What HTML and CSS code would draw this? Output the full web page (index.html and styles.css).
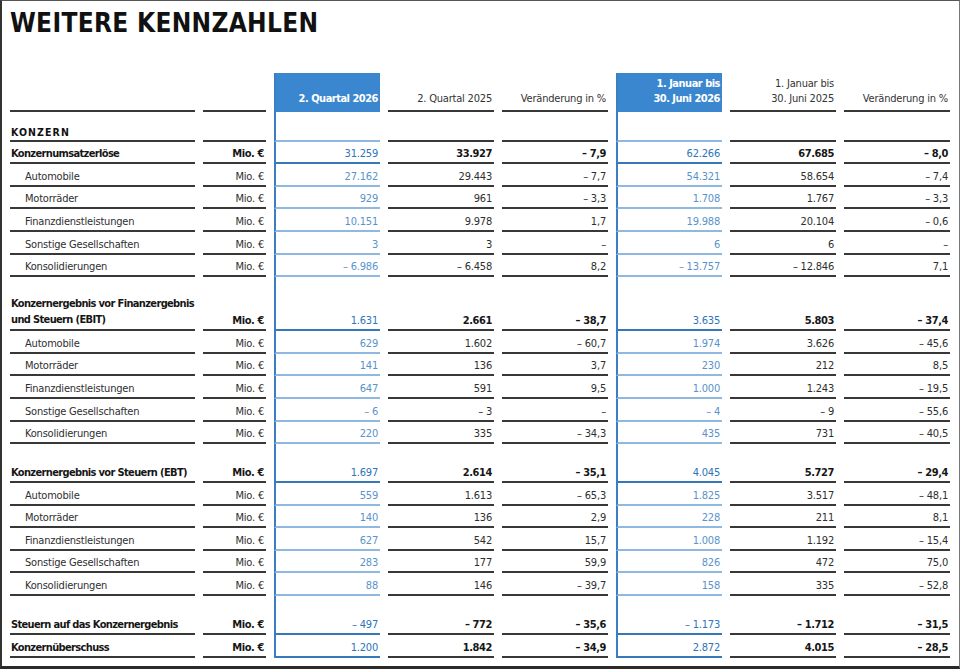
FILE: index.html
```html
<!DOCTYPE html>
<html lang="de">
<head>
<meta charset="utf-8">
<title>Weitere Kennzahlen</title>
<link rel="stylesheet" href="styles.css">
</head>
<body>
<div class="page">
  <h1 class="title">WEITERE KENNZAHLEN</h1>
  <table class="kz">
    <colgroup>
      <col class="c-lbl"><col class="c-unit">
      <col class="c-num"><col class="c-num"><col class="c-num">
      <col class="c-num"><col class="c-num"><col class="c-num">
    </colgroup>
    <thead>
      <tr class="hd">
        <th class="lbl"></th><th class="unit"></th>
        <th class="b">2. Quartal 2026</th>
        <th>2. Quartal 2025</th>
        <th>Veränderung in %</th>
        <th class="b">1. Januar bis<br>30. Juni 2026</th>
        <th>1. Januar bis<br>30. Juni 2025</th>
        <th>Veränderung in %</th>
      </tr>
    </thead>
    <tbody>
      <tr class="sec"><td class="lbl">KONZERN</td><td></td><td class="b"></td><td></td><td></td><td class="b"></td><td></td><td></td></tr>
      <tr class="t"><td class="lbl">Konzernumsatzerlöse</td><td class="unit">Mio. €</td><td class="b">31.259</td><td>33.927</td><td>–&nbsp;7,9</td><td class="b">62.266</td><td>67.685</td><td>–&nbsp;8,0</td></tr>
      <tr class="s"><td class="lbl">Automobile</td><td class="unit">Mio. €</td><td class="b">27.162</td><td>29.443</td><td>–&nbsp;7,7</td><td class="b">54.321</td><td>58.654</td><td>–&nbsp;7,4</td></tr>
      <tr class="s"><td class="lbl">Motorräder</td><td class="unit">Mio. €</td><td class="b">929</td><td>961</td><td>–&nbsp;3,3</td><td class="b">1.708</td><td>1.767</td><td>–&nbsp;3,3</td></tr>
      <tr class="s"><td class="lbl">Finanzdienstleistungen</td><td class="unit">Mio. €</td><td class="b">10.151</td><td>9.978</td><td>1,7</td><td class="b">19.988</td><td>20.104</td><td>–&nbsp;0,6</td></tr>
      <tr class="s"><td class="lbl">Sonstige Gesellschaften</td><td class="unit">Mio. €</td><td class="b">3</td><td>3</td><td>–</td><td class="b">6</td><td>6</td><td>–</td></tr>
      <tr class="s"><td class="lbl">Konsolidierungen</td><td class="unit">Mio. €</td><td class="b">–&nbsp;6.986</td><td>–&nbsp;6.458</td><td>8,2</td><td class="b">–&nbsp;13.757</td><td>–&nbsp;12.846</td><td>7,1</td></tr>

      <tr class="sp"><td></td><td></td><td class="b"></td><td></td><td></td><td class="b"></td><td></td><td></td></tr>
      <tr class="t two"><td class="lbl">Konzernergebnis vor Finanzergebnis<br>und Steuern (EBIT)</td><td class="unit">Mio. €</td><td class="b">1.631</td><td>2.661</td><td>–&nbsp;38,7</td><td class="b">3.635</td><td>5.803</td><td>–&nbsp;37,4</td></tr>
      <tr class="s"><td class="lbl">Automobile</td><td class="unit">Mio. €</td><td class="b">629</td><td>1.602</td><td>–&nbsp;60,7</td><td class="b">1.974</td><td>3.626</td><td>–&nbsp;45,6</td></tr>
      <tr class="s"><td class="lbl">Motorräder</td><td class="unit">Mio. €</td><td class="b">141</td><td>136</td><td>3,7</td><td class="b">230</td><td>212</td><td>8,5</td></tr>
      <tr class="s"><td class="lbl">Finanzdienstleistungen</td><td class="unit">Mio. €</td><td class="b">647</td><td>591</td><td>9,5</td><td class="b">1.000</td><td>1.243</td><td>–&nbsp;19,5</td></tr>
      <tr class="s"><td class="lbl">Sonstige Gesellschaften</td><td class="unit">Mio. €</td><td class="b">–&nbsp;6</td><td>–&nbsp;3</td><td>–</td><td class="b">–&nbsp;4</td><td>–&nbsp;9</td><td>–&nbsp;55,6</td></tr>
      <tr class="s"><td class="lbl">Konsolidierungen</td><td class="unit">Mio. €</td><td class="b">220</td><td>335</td><td>–&nbsp;34,3</td><td class="b">435</td><td>731</td><td>–&nbsp;40,5</td></tr>

      <tr class="sp"><td></td><td></td><td class="b"></td><td></td><td></td><td class="b"></td><td></td><td></td></tr>
      <tr class="t"><td class="lbl">Konzernergebnis vor Steuern (EBT)</td><td class="unit">Mio. €</td><td class="b">1.697</td><td>2.614</td><td>–&nbsp;35,1</td><td class="b">4.045</td><td>5.727</td><td>–&nbsp;29,4</td></tr>
      <tr class="s"><td class="lbl">Automobile</td><td class="unit">Mio. €</td><td class="b">559</td><td>1.613</td><td>–&nbsp;65,3</td><td class="b">1.825</td><td>3.517</td><td>–&nbsp;48,1</td></tr>
      <tr class="s"><td class="lbl">Motorräder</td><td class="unit">Mio. €</td><td class="b">140</td><td>136</td><td>2,9</td><td class="b">228</td><td>211</td><td>8,1</td></tr>
      <tr class="s"><td class="lbl">Finanzdienstleistungen</td><td class="unit">Mio. €</td><td class="b">627</td><td>542</td><td>15,7</td><td class="b">1.008</td><td>1.192</td><td>–&nbsp;15,4</td></tr>
      <tr class="s"><td class="lbl">Sonstige Gesellschaften</td><td class="unit">Mio. €</td><td class="b">283</td><td>177</td><td>59,9</td><td class="b">826</td><td>472</td><td>75,0</td></tr>
      <tr class="s"><td class="lbl">Konsolidierungen</td><td class="unit">Mio. €</td><td class="b">88</td><td>146</td><td>–&nbsp;39,7</td><td class="b">158</td><td>335</td><td>–&nbsp;52,8</td></tr>

      <tr class="sp"><td></td><td></td><td class="b"></td><td></td><td></td><td class="b"></td><td></td><td></td></tr>
      <tr class="t"><td class="lbl">Steuern auf das Konzernergebnis</td><td class="unit">Mio. €</td><td class="b">–&nbsp;497</td><td>–&nbsp;772</td><td>–&nbsp;35,6</td><td class="b">–&nbsp;1.173</td><td>–&nbsp;1.712</td><td>–&nbsp;31,5</td></tr>
      <tr class="t last"><td class="lbl">Konzernüberschuss</td><td class="unit">Mio. €</td><td class="b">1.200</td><td>1.842</td><td>–&nbsp;34,9</td><td class="b">2.872</td><td>4.015</td><td>–&nbsp;28,5</td></tr>
    </tbody>
  </table>
</div>
</body>
</html>
```
FILE: styles.css
```css
html, body {
  margin: 0;
  padding: 0;
  background: #fff;
}

body {
  font-family: "DejaVu Sans Condensed", "Liberation Sans", Arial, sans-serif;
  color: #222;
}

.page {
  width: 960px;
  height: 669px;
  box-sizing: border-box;
  border-top: 1px solid #555;
  border-right: 1px solid #777;
  border-left: 2px solid #333;
  border-bottom: 3px solid #2a2a2a;
  padding-top: 9px;
  overflow: hidden;
  background: #fff;
}

.title {
  margin: 0 0 0 8px;
  font-family: "DejaVu Sans Condensed", "Liberation Sans", Arial, sans-serif;
  font-size: 26px;
  line-height: 27px;
  font-weight: 700;
  letter-spacing: 0.3px;
  color: #111;
}

.kz {
  margin-top: 36px;
  border-collapse: separate;
  border-spacing: 8px 0;
  table-layout: fixed;
  width: 956px;
  font-size: 11px;
  letter-spacing: -0.2px;
}

.c-lbl { width: 185px; }
.c-unit { width: 63px; }
.c-num { width: 106px; }

.kz th,
.kz td {
  padding: 0 2px 1px 0;
  text-align: right;
  vertical-align: bottom;
  line-height: 14px;
  white-space: nowrap;
  border-bottom: 2px solid #383838;
}

.kz .lbl {
  text-align: left;
  padding-left: 1px;
}

/* header */
.hd {
  height: 39px;
}

.kz .hd th {
  font-weight: 400;
  color: #333;
  line-height: 15px;
  padding-bottom: 4px;
}

.kz .hd th.b {
  background: #3b87cf;
  color: #fff;
  font-weight: 700;
  letter-spacing: -0.5px;
  border-bottom-color: #3b87cf;
}

/* blue highlighted columns */
.kz td.b,
.kz th.b {
  border-left: 2px solid #3a7fc2;
}

.kz td.b {
  border-bottom-color: #8fb9e1;
  color: #5a93cb;
}

/* section row */
.sec {
  height: 29.5px;
}

.kz .sec .lbl {
  font-weight: 700;
  font-size: 10.5px;
  letter-spacing: 1.1px;
  color: #111;
}

/* total rows */
.t {
  height: 22.8px;
}

.kz .t td {
  font-weight: 700;
  letter-spacing: -0.4px;
  color: #161616;
}

.kz .t .lbl {
  letter-spacing: -0.65px;
}

.kz .t td.b {
  font-weight: 400;
  letter-spacing: -0.2px;
  color: #2c74bb;
  border-bottom-color: #3678ba;
}

.kz .two {
  height: 38px;
}

.kz .two .lbl {
  line-height: 16px;
}

/* sub rows */
.s {
  height: 22.6px;
}

.kz .s td {
  color: #2e2e2e;
}

.kz .s .lbl {
  padding-left: 15px;
}

.kz .s td.b {
  color: #5a93cb;
}

/* spacer rows */
.sp {
  height: 16px;
}

.kz .sp td {
  border-bottom: 0;
  padding: 0;
}
```
